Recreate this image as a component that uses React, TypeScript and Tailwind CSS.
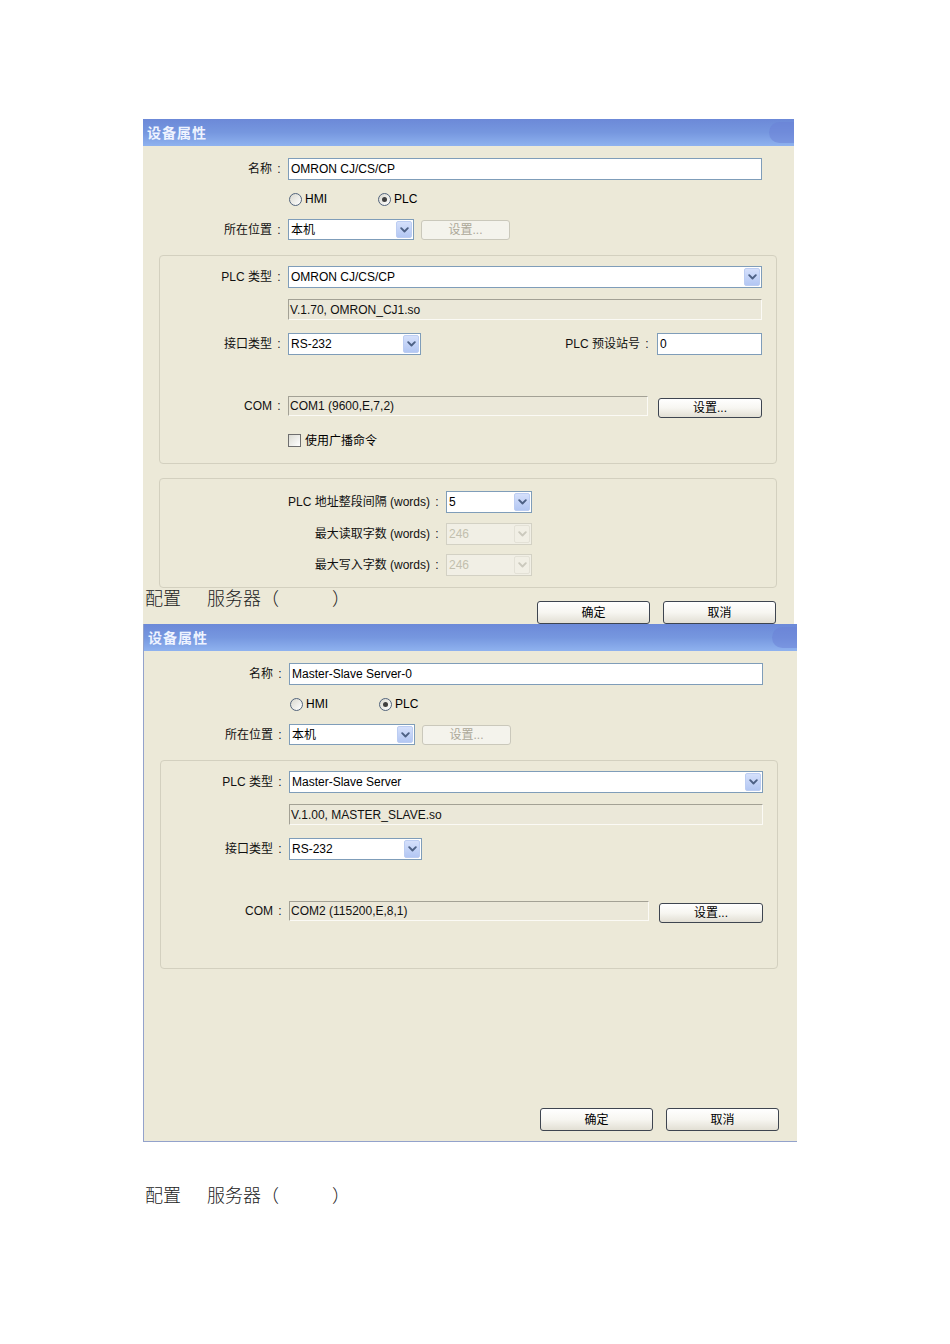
import React from 'react';

function Chevron({ disabled }: { disabled?: boolean }) {
  return (
    <svg width="9" height="6" viewBox="0 0 9 6">
      <path d="M1.2 1.2 L4.5 4.5 L7.8 1.2" fill="none" stroke={disabled ? '#cbc9bd' : '#4d6185'} strokeWidth="1.9" strokeLinecap="round" strokeLinejoin="round" />
    </svg>
  );
}

function Select({ w, value, disabled, h = 'h-[22px]' }: { w: string; value: string; disabled?: boolean; h?: string }) {
  return (
    <div className={`flex ${w} ${h} items-stretch border p-[1px] ${disabled ? 'border-[#d3d1c4] bg-[#f1efe5]' : 'border-[#7f9db9] bg-white'}`}>
      <div className={`flex flex-1 items-center pl-[1px] text-[12px] leading-none ${disabled ? 'text-[#c2bfae]' : 'text-black'}`}>{value}</div>
      {disabled ? (
        <div className="flex w-[16px] items-center justify-center rounded-[2px] border border-[#e3e1d6]">
          <Chevron disabled />
        </div>
      ) : (
        <div className="flex w-[16px] items-center justify-center rounded-[2px] border border-[#bccdf2] bg-linear-to-b from-[#d5e0fb] to-[#b3c7f3]">
          <Chevron />
        </div>
      )}
    </div>
  );
}

function TextInput({ w, value }: { w: string; value: string }) {
  return (
    <div className={`flex ${w} h-[22px] items-center border border-[#7f9db9] bg-white pl-[2px] text-[12px] leading-none text-black`}>{value}</div>
  );
}

function ReadField({ w, h, value }: { w: string; h: string; value: string }) {
  return (
    <div className={`flex ${w} ${h} items-center border-t border-l border-b border-r border-t-[#a3a195] border-l-[#a3a195] border-b-[#fbfaf5] border-r-[#fbfaf5] bg-[#ebe8d9] pl-[1px] text-[12px] leading-none text-[#111]`}>{value}</div>
  );
}

function Btn({ w, h, label, disabled }: { w: string; h: string; label: string; disabled?: boolean }) {
  return (
    <div
      className={`flex ${w} ${h} shrink-0 items-center justify-center rounded-[3px] border text-[12px] leading-none ${
        disabled
          ? 'border-[#cac8bb] bg-[#f4f3ec] text-[#aca899]'
          : 'border-[#3e4550] bg-linear-to-b from-white via-[#f7f6f1] to-[#e2dfd4] text-black'
      }`}
    >
      {label}
    </div>
  );
}

function Radio({ checked, label }: { checked?: boolean; label: string }) {
  return (
    <div className="flex items-center">
      <div className="flex h-[13px] w-[13px] items-center justify-center rounded-full border border-[#52647c] bg-linear-to-br from-[#d9d8cf] to-white">
        {checked && <div className="h-[5px] w-[5px] rounded-full bg-[#3f3f3f]" />}
      </div>
      <span className="ml-[3px] text-[12px] leading-none text-black">{label}</span>
    </div>
  );
}

function Checkbox({ label }: { label: string }) {
  return (
    <div className="flex items-center">
      <div className="h-[13px] w-[13px] border border-[#6e6e6e] bg-linear-to-br from-[#dcdcd4] to-white" />
      <span className="ml-[4px] text-[12px] leading-none text-black">{label}</span>
    </div>
  );
}

function Label({ w, text }: { w: string; text?: string }) {
  return (
    <div className={`${w} flex shrink-0 items-center justify-end text-[12px] leading-none text-[#111]`}>
      {text && (
        <>
          <span>{text}</span>
          <span className="w-[14px] text-center">:</span>
        </>
      )}
    </div>
  );
}

function TitleBar() {
  return (
    <div className="relative flex h-[27px] items-center bg-linear-to-b from-[#6c89d8] via-[#7697df] to-[#8fb2ef] pl-[4px]">
      <span className="text-[14px] font-bold leading-none tracking-[1px] text-[#eef3ff]">设备属性</span>
      <div className="absolute right-0 top-[3px] h-[21px] w-[25px] rounded-l-[11px] bg-[#6a7fd6] opacity-50" />
    </div>
  );
}

function TopRows({ name }: { name: string }) {
  return (
    <>
      <div className="flex items-center pt-[12px]">
        <Label w="w-[143px]" text="名称" />
        <div className="ml-[2px]">
          <TextInput w="w-[474px]" value={name} />
        </div>
      </div>
      <div className="mt-[12px] flex h-[14px] items-center pl-[146px]">
        <div className="w-[89px]">
          <Radio label="HMI" />
        </div>
        <Radio checked label="PLC" />
      </div>
      <div className="mt-[13px] flex items-center">
        <Label w="w-[143px]" text="所在位置" />
        <div className="ml-[2px] flex items-center">
          <Select w="w-[126px]" h="h-[21px]" value="本机" />
          <div className="ml-[7px]">
            <Btn w="w-[89px]" h="h-[20px]" label="设置..." disabled />
          </div>
        </div>
      </div>
    </>
  );
}

function GroupOne({ plc, info, com, full }: { plc: string; info: string; com: string; full?: boolean }) {
  return (
    <div className="ml-[16px] mt-[15px] h-[209px] w-[618px] rounded-[4px] border border-[#d3d0bf] pr-[14px] pt-[10px]">
      <div className="flex items-center">
        <Label w="w-[126px]" text="PLC 类型" />
        <div className="ml-[2px]">
          <Select w="w-[474px]" value={plc} />
        </div>
      </div>
      <div className="mt-[11px] flex items-center">
        <Label w="w-[126px]" />
        <div className="ml-[2px]">
          <ReadField w="w-[474px]" h="h-[21px]" value={info} />
        </div>
      </div>
      <div className="mt-[13px] flex items-center">
        <Label w="w-[126px]" text="接口类型" />
        <div className="ml-[2px]">
          <Select w="w-[133px]" value="RS-232" />
        </div>
        {full && (
          <>
            <Label w="flex-1" text="PLC 预设站号" />
            <div className="ml-[3px]">
              <TextInput w="w-[105px]" value="0" />
            </div>
          </>
        )}
      </div>
      <div className="mt-[41px] flex items-start">
        <div className="flex h-[20px] items-center">
          <Label w="w-[126px]" text="COM" />
        </div>
        <div className="ml-[2px]">
          <ReadField w="w-[360px]" h="h-[20px]" value={com} />
        </div>
        <div className="ml-[10px] mt-[2px]">
          <Btn w="w-[104px]" h="h-[20px]" label="设置..." />
        </div>
      </div>
      {full && (
        <div className="mt-[16px] flex items-center">
          <Label w="w-[126px]" />
          <div className="ml-[2px]">
            <Checkbox label="使用广播命令" />
          </div>
        </div>
      )}
    </div>
  );
}

function GroupTwo() {
  return (
    <div className="ml-[16px] mt-[14px] h-[110px] w-[618px] rounded-[4px] border border-[#d3d0bf] pt-[12px]">
      <div className="flex items-center">
        <Label w="w-[284px]" text="PLC 地址整段间隔 (words)" />
        <div className="ml-[2px]">
          <Select w="w-[86px]" value="5" />
        </div>
      </div>
      <div className="mt-[10px] flex items-center">
        <Label w="w-[284px]" text="最大读取字数 (words)" />
        <div className="ml-[2px]">
          <Select w="w-[86px]" value="246" disabled />
        </div>
      </div>
      <div className="mt-[9px] flex items-center">
        <Label w="w-[284px]" text="最大写入字数 (words)" />
        <div className="ml-[2px]">
          <Select w="w-[86px]" value="246" disabled />
        </div>
      </div>
    </div>
  );
}

function Buttons({ className }: { className: string }) {
  return (
    <div className={`flex justify-end gap-[13px] pr-[18px] ${className}`}>
      <Btn w="w-[113px]" h="h-[23px]" label="确定" />
      <Btn w="w-[113px]" h="h-[23px]" label="取消" />
    </div>
  );
}

function Caption() {
  return (
    <div className="flex text-[18px] font-light leading-[18px] text-[#222] font-['Liberation_Serif','Noto_Sans_CJK_SC',serif]">
      <span>配置</span>
      <span className="ml-[26px]">服务器（</span>
      <span className="ml-[53px]">）</span>
    </div>
  );
}

export default function App() {
  return (
    <div className="min-h-[1344px] w-[950px] bg-white pt-[119px] font-['Liberation_Sans','Noto_Sans_CJK_SC',sans-serif]">
      {/* Dialog 1 */}
      <div className="relative ml-[143px] h-[505px] w-[651px] overflow-hidden">
        <TitleBar />
        <div className="h-[478px] bg-[#ece9d8]">
          <TopRows name="OMRON CJ/CS/CP" />
          <GroupOne full plc="OMRON CJ/CS/CP" info="V.1.70, OMRON_CJ1.so" com="COM1 (9600,E,7,2)" />
          <GroupTwo />
          <Buttons className="mt-[13px]" />
        </div>
        <div className="absolute left-[2px] top-[471px]">
          <Caption />
        </div>
      </div>

      {/* Dialog 2 */}
      <div className="ml-[143px] w-[654px] border-b border-l border-[#93a2cb]">
        <TitleBar />
        <div className="flex h-[490px] flex-col bg-[#ece9d8]">
          <TopRows name="Master-Slave Server-0" />
          <GroupOne plc="Master-Slave Server" info="V.1.00, MASTER_SLAVE.so" com="COM2 (115200,E,8,1)" />
          <Buttons className="mt-auto mb-[10px]" />
        </div>
      </div>

      <div className="ml-[145px] mt-[45px]">
        <Caption />
      </div>
    </div>
  );
}
